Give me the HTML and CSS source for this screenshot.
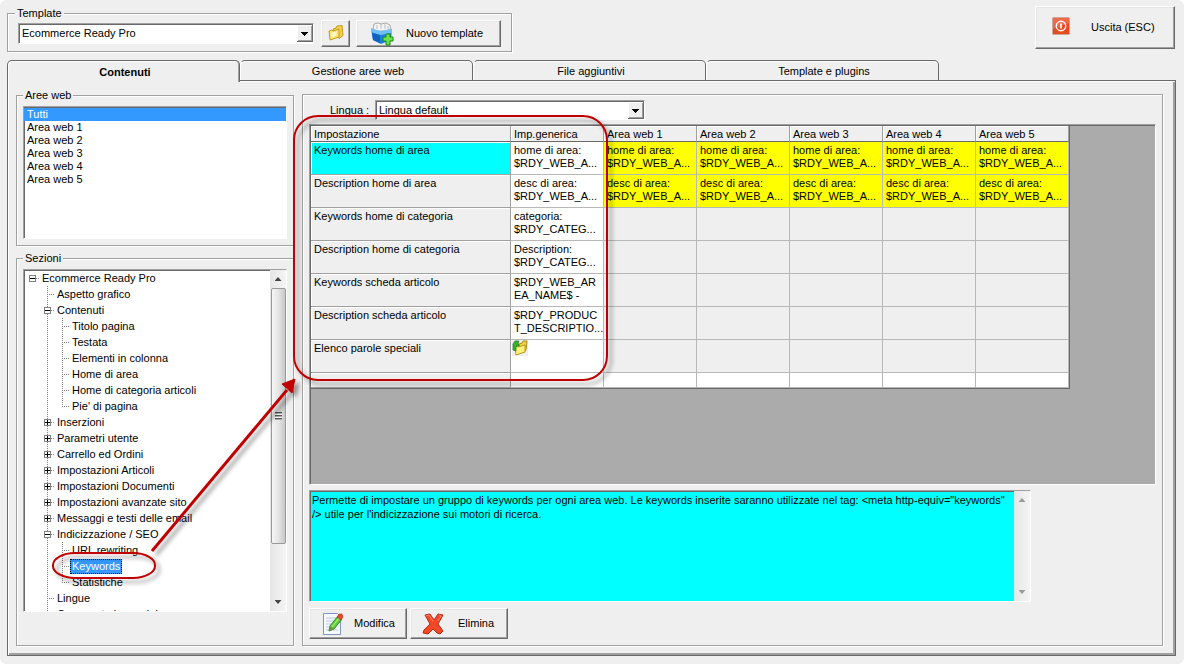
FILE: index.html
```html
<!DOCTYPE html>
<html lang="it">
<head>
  <meta charset="UTF-8" />
  <meta name="viewport" content="width=device-width, initial-scale=1.0"/>
  <title>Ecommerce Ready Pro</title>
  <link rel="stylesheet" href="styles.css">
</head>
<body>
  <div class="window">
    <header class="toolbar">
      <fieldset class="group template-group">
        <legend>Template</legend>
        <select class="combo template-select" aria-label="Template">
          <option>Ecommerce Ready Pro</option>
        </select>
        <button class="btn folder-btn" aria-label="Apri cartella">
          <svg width="18" height="18" viewBox="0 0 18 18">
            <path d="M6 4l3-1 1-2 5-.5 1 10-4 3z" fill="#f3cf4a" stroke="#c79a1c"/>
            <path d="M2 6l3-1 1 1 6-2 0 8-9 3z" fill="#ffe170" stroke="#c79a1c"/>
            <path d="M4 8l6-2-1 5-5 2z" fill="#fff6c4"/>
          </svg>
        </button>
        <button class="btn new-btn">
          <svg width="24" height="24" viewBox="0 0 24 24">
            <path d="M3 8l1-6 4-1 3 1 5-1 4 2 1 6H4z" fill="#f4f4f4" stroke="#aaa"/>
            <path d="M7 7V3M11 7V2M15 7V2M18 8V4" stroke="#bbb"/>
            <path d="M1 7l9 3 12-3-1 11-10 4-8-4z" fill="#1e7fe0"/>
            <path d="M1 6l9 3 12-2 0 4-12 2-9-3z" fill="#6fc0fa"/>
            <path d="M10 13v8l-7-3-1-7z" fill="#1262bd"/>
            <path d="M16 12h4v3h3v4h-3v4h-4v-4h-3v-4h3z" fill="#6be34c" stroke="#148a12"/>
          </svg>
          <span>Nuovo template</span>
        </button>
      </fieldset>
      <button class="btn exit-btn">
        <svg width="18" height="18" viewBox="0 0 18 18">
          <rect x=".5" y=".5" width="17" height="17" rx="1" fill="#e84a20" stroke="#c9a79c"/>
          <path d="M1 1h16v5L1 12z" fill="#f0694a"/>
          <circle cx="9" cy="9" r="4.7" fill="none" stroke="#fff" stroke-width="1.4"/>
          <path d="M9 6.500v5" stroke="#fff" stroke-width="1.700"/>
        </svg>
        <span>Uscita (ESC)</span>
      </button>
    </header>

    <nav class="tabs" role="tablist">
      <button class="tab active" role="tab" aria-selected="true">Contenuti</button>
      <button class="tab" role="tab">Gestione aree web</button>
      <button class="tab" role="tab">File aggiuntivi</button>
      <button class="tab" role="tab">Template e plugins</button>
    </nav>

    <main class="panel">
      <div class="sidebar">
        <fieldset class="group areas-group">
          <legend>Aree web</legend>
          <select class="areas-list" size="6" aria-label="Aree web">
            <option selected>Tutti</option>
            <option>Area web 1</option>
            <option>Area web 2</option>
            <option>Area web 3</option>
            <option>Area web 4</option>
            <option>Area web 5</option>
          </select>
        </fieldset>

        <fieldset class="group sections-group">
          <legend>Sezioni</legend>
          <div class="tree-box">
            <ul class="tree">
              <li class="root">
                <div class="row"><span class="node"><button class="toggle minus" aria-label="Comprimi"></button></span><a href="#">Ecommerce Ready Pro</a></div>
                <ul>
                  <li><div class="row"><span class="node"></span><a href="#">Aspetto grafico</a></div></li>
                  <li>
                    <div class="row"><span class="node"><button class="toggle minus" aria-label="Comprimi"></button></span><a href="#">Contenuti</a></div>
                    <ul>
                      <li><div class="row"><span class="node"></span><a href="#">Titolo pagina</a></div></li>
                      <li><div class="row"><span class="node"></span><a href="#">Testata</a></div></li>
                      <li><div class="row"><span class="node"></span><a href="#">Elementi in colonna</a></div></li>
                      <li><div class="row"><span class="node"></span><a href="#">Home di area</a></div></li>
                      <li><div class="row"><span class="node"></span><a href="#">Home di categoria articoli</a></div></li>
                      <li><div class="row"><span class="node"></span><a href="#">Pie' di pagina</a></div></li>
                    </ul>
                  </li>
                  <li><div class="row"><span class="node"><button class="toggle plus" aria-label="Espandi"></button></span><a href="#">Inserzioni</a></div></li>
                  <li><div class="row"><span class="node"><button class="toggle plus" aria-label="Espandi"></button></span><a href="#">Parametri utente</a></div></li>
                  <li><div class="row"><span class="node"><button class="toggle plus" aria-label="Espandi"></button></span><a href="#">Carrello ed Ordini</a></div></li>
                  <li><div class="row"><span class="node"><button class="toggle plus" aria-label="Espandi"></button></span><a href="#">Impostazioni Articoli</a></div></li>
                  <li><div class="row"><span class="node"><button class="toggle plus" aria-label="Espandi"></button></span><a href="#">Impostazioni Documenti</a></div></li>
                  <li><div class="row"><span class="node"><button class="toggle plus" aria-label="Espandi"></button></span><a href="#">Impostazioni avanzate sito</a></div></li>
                  <li><div class="row"><span class="node"><button class="toggle plus" aria-label="Espandi"></button></span><a href="#">Messaggi e testi delle email</a></div></li>
                  <li>
                    <div class="row"><span class="node"><button class="toggle minus" aria-label="Comprimi"></button></span><a href="#">Indicizzazione / SEO</a></div>
                    <ul>
                      <li><div class="row"><span class="node"></span><a href="#">URL rewriting</a></div></li>
                      <li><div class="row"><span class="node"></span><a href="#" class="selected">Keywords</a></div></li>
                      <li><div class="row"><span class="node"></span><a href="#">Statistiche</a></div></li>
                    </ul>
                  </li>
                  <li><div class="row"><span class="node"></span><a href="#">Lingue</a></div></li>
                  <li><div class="row"><span class="node"></span><a href="#">Commento immagini</a></div></li>
                  <li><div class="row"><span class="node"></span></div></li>
                </ul>
              </li>
            </ul>
            <div class="scrollbar">
              <span class="arrow up"></span>
              <span class="thumb"><span class="grip"></span></span>
              <span class="arrow down"></span>
            </div>
          </div>
        </fieldset>
      </div>

      <section class="content">
        <div class="lang-row">
          <label for="lang">Lingua :</label>
          <select class="combo" id="lang">
            <option>Lingua default</option>
          </select>
        </div>

        <div class="grid-box">
          <table class="grid">
            <thead>
              <tr>
                <th class="name-col">Impostazione</th>
                <th>Imp.generica</th>
                <th>Area web 1</th>
                <th>Area web 2</th>
                <th>Area web 3</th>
                <th>Area web 4</th>
                <th>Area web 5</th>
              </tr>
            </thead>
            <tbody>
              <tr class="filled">
                <th class="current">Keywords home di area</th>
                <td>home di area:<br>$RDY_WEB_A...</td>
                <td>home di area:<br>$RDY_WEB_A...</td>
                <td>home di area:<br>$RDY_WEB_A...</td>
                <td>home di area:<br>$RDY_WEB_A...</td>
                <td>home di area:<br>$RDY_WEB_A...</td>
                <td>home di area:<br>$RDY_WEB_A...</td>
              </tr>
              <tr class="filled">
                <th>Description home di area</th>
                <td>desc di area:<br>$RDY_WEB_A...</td>
                <td>desc di area:<br>$RDY_WEB_A...</td>
                <td>desc di area:<br>$RDY_WEB_A...</td>
                <td>desc di area:<br>$RDY_WEB_A...</td>
                <td>desc di area:<br>$RDY_WEB_A...</td>
                <td>desc di area:<br>$RDY_WEB_A...</td>
              </tr>
              <tr>
                <th>Keywords home di categoria</th>
                <td>categoria:<br>$RDY_CATEG...</td>
                <td></td><td></td><td></td><td></td><td></td>
              </tr>
              <tr>
                <th>Description home di categoria</th>
                <td>Description:<br>$RDY_CATEG...</td>
                <td></td><td></td><td></td><td></td><td></td>
              </tr>
              <tr>
                <th>Keywords scheda articolo</th>
                <td>$RDY_WEB_AR<br>EA_NAME$ -</td>
                <td></td><td></td><td></td><td></td><td></td>
              </tr>
              <tr>
                <th>Description scheda articolo</th>
                <td>$RDY_PRODUC<br>T_DESCRIPTIO...</td>
                <td></td><td></td><td></td><td></td><td></td>
              </tr>
              <tr>
                <th>Elenco parole speciali</th>
                <td class="icon-cell">
                  <svg width="16" height="16" viewBox="0 0 16 16">
                    <rect width="16" height="16" fill="#efefef"/>
                    <path d="M7 4l3-1 1-2h4l-1 9-5 3z" fill="#f0d040" stroke="#b08a18"/>
                    <path d="M3 6l3 1 7-2v7l-9 3z" fill="#fff27a" stroke="#c0981c"/>
                    <path d="M1 10V4l2-3h4l-1 2 1 3-3 0v5z" fill="#35b52c" stroke="#14781a" stroke-width=".7"/>
                  </svg>
                </td>
                <td></td><td></td><td></td><td></td><td></td>
              </tr>
              <tr class="blank">
                <th></th><td></td><td></td><td></td><td></td><td></td><td></td>
              </tr>
            </tbody>
          </table>
        </div>

        <div class="help-box">
          <textarea class="help-text" readonly aria-label="Descrizione">Permette di impostare un gruppo di keywords per ogni area web. Le keywords inserite saranno utilizzate nel tag: &lt;meta http-equiv="keywords" /&gt; utile per l'indicizzazione sui motori di ricerca.</textarea>
          <div class="scrollbar disabled">
            <span class="arrow up"></span>
            <span class="arrow down"></span>
          </div>
        </div>

        <div class="actions">
          <button class="btn action-btn">
            <svg width="22" height="24" viewBox="0 0 22 24">
              <path d="M1.500 1.500h14l3 3v18h-17z" fill="#f6f9ff" stroke="#7f93bd"/>
              <path d="M4 6h10M4 9h9M4 12h6M4 15h4M4 18h12" stroke="#b9c6e2"/>
              <path d="M7 19l1-5 8-10 4 3-8 10z" fill="#63cf3a" stroke="#2c8a1c"/>
              <path d="M10 15l7-9" stroke="#b8f296"/>
              <path d="M7 19l1-5 4 3z" fill="#6f9a3a"/>
              <path d="M15 5l2-3 3 0 1 3-2 3z" fill="#e8492c" stroke="#b83018" stroke-width=".6"/>
            </svg>
            <span>Modifica</span>
          </button>
          <button class="btn action-btn">
            <svg width="22" height="24" viewBox="0 0 22 24">
              <path d="M3 3l5-1 4 6 4-6 5 1-5 9 5 7-3 3-3-1-4-4-5 5-5-1 1-3 6-6z" fill="#f4482a" stroke="#bd2a10"/>
              <path d="M4 4l3-1 4 6M17 3l2 1-3 5" stroke="#ff8a68" fill="none"/>
            </svg>
            <span>Elimina</span>
          </button>
        </div>
      </section>
    </main>

    <!-- red callouts drawn over the window -->
    <svg class="callouts" width="620" height="600" viewBox="0 0 620 600">
      <defs>
        <filter id="shadow" x="-10%" y="-10%" width="130%" height="130%">
          <feDropShadow dx="4" dy="4" stdDeviation="2" flood-color="#000" flood-opacity=".4"/>
        </filter>
      </defs>
      <g filter="url(#shadow)" fill="none" stroke="#c00000">
        <rect x="294" y="116" width="313" height="264" rx="24" stroke-width="2"/>
        <rect x="53" y="553" width="102" height="25" rx="22" ry="12" stroke-width="2"/>
        <path d="M152 551L287 390" stroke-width="3"/>
        <path d="M295 379l-3 14-10-9z" fill="#c00000"/>
      </g>
    </svg>
  </div>
</body>
</html>
```
FILE: styles.css
```css
* {
  box-sizing: border-box;
}
body {
  margin: 0;
  background: #fff;
  color: #000;
}
body, button, select, textarea {
  font-family: "Liberation Sans", Arial, sans-serif;
  font-size: 11px;
  line-height: 13px;
}
.window {
  position: relative;
  display: flex;
  flex-direction: column;
  height: 100vh;
  min-height: 600px;
  padding: 6px 8px 8px 7px;
  background: #efefef;
  border-radius: 6px;
}
svg {
  flex: none;
}

/* group boxes */
.group {
  margin: 0;
  min-width: 0;
  border: 1px solid #a0a0a0;
  box-shadow: 1px 1px 0 #fff, inset 1px 1px 0 #fff;
}
.group legend {
  padding: 0 2px;
  background: #efefef;
}

/* buttons */
.btn {
  display: flex;
  align-items: center;
  padding: 0;
  color: #000;
  background: #efefef;
  border: 1px solid;
  border-color: #fff #696969 #696969 #fff;
  box-shadow: inset -1px -1px 0 #a0a0a0, inset 1px 1px 0 #e6e6e6;
}

/* drop-downs */
.combo {
  appearance: none;
  height: 21px;
  padding: 0 20px 0 3px;
  border: 1px solid;
  border-color: #a0a0a0 #fff #fff #a0a0a0;
  border-radius: 0;
  box-shadow: inset 1px 1px 0 #696969;
  background: #fff url("data:image/svg+xml,%3Csvg xmlns='http://www.w3.org/2000/svg' width='16' height='17'%3E%3Cpath d='M0 0h16v17H0z' fill='%23696969'/%3E%3Cpath d='M0 0h15v16H0z' fill='%23fff'/%3E%3Cpath d='M1 1h14v15H1z' fill='%23a0a0a0'/%3E%3Cpath d='M1 1h13v14H1z' fill='%23efefef'/%3E%3Cpath d='M4 7h7v1h-1v1H9v1H8v1H7v-1H6V9H5V8H4z'/%3E%3C/svg%3E") no-repeat right center;
}

/* toolbar */
.toolbar {
  display: flex;
  justify-content: space-between;
  align-items: flex-start;
  padding-right: 1px;
}
.template-group {
  display: flex;
  align-items: center;
  width: 505px;
  margin-top: 1px;
  padding: 0 10px 4px;
}
.template-group legend {
  margin-left: -3px;
}
.template-select {
  flex: 1;
  margin-right: 7px;
}
.folder-btn {
  justify-content: center;
  width: 29px;
  height: 27px;
  margin-right: 6px;
}
.new-btn {
  width: 145px;
  height: 27px;
  padding-left: 13px;
  gap: 12px;
}
.exit-btn {
  width: 140px;
  height: 43px;
  padding: 0 0 4px 16px;
  gap: 21px;
}
.exit-btn span {
  padding-top: 4px;
}

/* tabs */
.tabs {
  display: flex;
  margin-top: 8px;
  margin-bottom: -1px;
}
.tab {
  width: 233px;
  height: 21px;
  padding: 2px 0 0 3px;
  color: #000;
  background: #efefef;
  border: 1px solid #696969;
  border-left-color: #fff;
  border-radius: 5px 5px 0 0;
  box-shadow: inset 0 1px 0 #fff;
}
.tab.active {
  z-index: 1;
  height: 22px;
  margin-bottom: -1px;
  font-weight: bold;
  border-left-color: #696969;
  border-bottom: none;
  box-shadow: inset 1px 1px 0 #fff, inset -1px 0 0 #a0a0a0;
}

/* main panel */
.panel {
  flex: 1;
  display: flex;
  gap: 8px;
  min-height: 0;
  padding: 8px 12px 9px 8px;
  border: 1px solid #696969;
  box-shadow: inset 1px 1px 0 #fff, inset -2px -2px 0 #a0a0a0;
}
.sidebar {
  display: flex;
  flex-direction: column;
  gap: 6px;
  width: 278px;
}
.areas-group, .sections-group {
  padding: 4px 6px 6px;
}
.areas-group legend, .sections-group legend {
  margin-left: 0;
}
.areas-list {
  display: block;
  width: 100%;
  height: 133px;
  padding: 1px 0 0;
  overflow: hidden;
  background: #fff;
  border: 1px solid;
  border-color: #a0a0a0 #fff #fff #a0a0a0;
  border-radius: 0;
  box-shadow: inset 1px 1px 0 #696969;
  outline: none;
}
.areas-list option {
  height: 13px;
  min-height: 13px;
  padding: 0 3px;
}
.areas-list option:checked {
  color: #fff;
  background: linear-gradient(#39f, #39f);
}
.sections-group {
  flex: 1;
  display: flex;
  min-height: 0;
  padding-bottom: 33px;
}

/* tree */
.tree-box {
  flex: 1;
  display: flex;
  min-height: 0;
  overflow: hidden;
  background: #fff;
  border: 1px solid;
  border-color: #a0a0a0 #fff #fff #a0a0a0;
  box-shadow: inset 1px 1px 0 #696969;
}
.tree {
  flex: 1;
  padding: 0 0 0 3px;
}
.tree, .tree ul {
  margin: 0;
  list-style: none;
}
.tree ul {
  padding: 0 0 0 15px;
}
.tree li {
  background: repeating-linear-gradient(#808080 0 1px, #fff 1px 2px) no-repeat 5px 0 / 1px 100%;
}
.tree li:last-child {
  background-size: 1px 9px;
}
.tree .root {
  background: none;
}
.row {
  display: flex;
  align-items: center;
  height: 16px;
  white-space: nowrap;
}
.node {
  display: flex;
  align-items: center;
  width: 13px;
  height: 16px;
  padding-left: 2px;
  background: repeating-linear-gradient(90deg, #808080 0 1px, #fff 1px 2px) no-repeat 5px 8px / 8px 1px;
}
.row a {
  padding: 1px 2px;
  color: #000;
  text-decoration: none;
}
.row .selected {
  color: #fff;
  background: #39f;
  outline: 1px dotted #000;
  outline-offset: -1px;
}
.toggle {
  width: 7px;
  height: 7px;
  margin-top: 1px;
  padding: 0;
  border: 1px solid #808080;
  background: linear-gradient(#000, #000) no-repeat center / 5px 1px, #fff;
}
.toggle.plus {
  background: linear-gradient(#000, #000) no-repeat center / 5px 1px, linear-gradient(#000, #000) no-repeat center / 1px 5px, #fff;
}

/* scrollbars */
.scrollbar {
  display: flex;
  flex-direction: column;
  align-items: center;
  width: 16px;
  background: linear-gradient(90deg, #e6e6e6, #f4f4f4);
}
.arrow {
  width: 7px;
  height: 4px;
  margin: 7px 0;
  background: #444;
}
.arrow.up {
  clip-path: polygon(50% 0, 100% 100%, 0 100%);
}
.arrow.down {
  margin-top: auto;
  clip-path: polygon(0 0, 100% 0, 50% 100%);
}
.disabled .arrow {
  background: #999;
}
.thumb {
  display: flex;
  align-items: center;
  justify-content: center;
  width: 15px;
  height: 75%;
  border: 1px solid #999;
  border-radius: 2px;
  background: linear-gradient(90deg, #f6f6f6, #e4e4e4 50%, #c8c8c8);
}
.grip {
  width: 7px;
  height: 8px;
  background: repeating-linear-gradient(#555 0 1px, #aaa 1px 2px, #fff 2px 3px);
}

/* settings */
.content {
  flex: 1;
  display: flex;
  flex-direction: column;
  min-width: 0;
  margin-top: 5px;
  padding: 5px 6px 6px;
  border: 1px solid #a0a0a0;
  box-shadow: 1px 1px 0 #fff, inset 1px 1px 0 #fff;
}
.lang-row {
  display: flex;
  align-items: center;
  padding-left: 21px;
}
.lang-row label {
  width: 45px;
}
.lang-row .combo {
  width: 270px;
  height: 20px;
}
.grid-box {
  flex: 1;
  min-height: 0;
  margin-top: 4px;
  overflow: hidden;
  background: #ababab;
  border: 1px solid;
  border-color: #a0a0a0 #fff #fff #a0a0a0;
  box-shadow: inset 1px 1px 0 #696969;
  padding: 1px 0 0 1px;
}
.grid {
  width: 759px;
  table-layout: fixed;
  border-collapse: separate;
  border-spacing: 0;
  border-right: 1px solid #696969;
  border-bottom: 1px solid #696969;
}
.grid th, .grid td {
  height: 33px;
  padding: 2px 0 0 3px;
  text-align: left;
  vertical-align: top;
  font-weight: normal;
  white-space: nowrap;
  overflow: hidden;
  background: #efefef;
  border-right: 1px solid #b8b8b8;
  border-bottom: 1px solid #b8b8b8;
}
.grid th {
  border-color: #a0a0a0;
  box-shadow: inset 1px 1px 0 #fff;
}
.grid thead th {
  height: 16px;
  border-bottom-color: #696969;
}
.grid .name-col {
  width: 200px;
}
.grid .current {
  background: #0ff;
}
.grid td:nth-child(2), .grid .blank td {
  background: #fff;
}
.grid .filled td:nth-child(n+3) {
  background: #ff0;
}
.grid .icon-cell {
  padding: 0 0 0 1px;
}
.grid .blank th, .grid .blank td {
  height: 15px;
  padding: 0;
}

/* description */
.help-box {
  display: flex;
  width: 722px;
  max-width: 100%;
  height: 112px;
  margin-top: 5px;
  border: 1px solid;
  border-color: #a0a0a0 #fff #fff #a0a0a0;
}
.help-text {
  flex: 1;
  padding: 1px 0 0 1px;
  color: #000;
  line-height: 14px;
  background: #0ff;
  border: none;
  border-top: 1px solid #696969;
  border-left: 1px solid #696969;
  border-radius: 0;
  outline: none;
  resize: none;
  overflow: hidden;
}
.actions {
  display: flex;
  gap: 3px;
  margin-top: 6px;
}
.action-btn {
  width: 98px;
  height: 31px;
  padding-left: 12px;
  gap: 10px;
}
.action-btn + .action-btn {
  padding-left: 11px;
  gap: 14px;
}

.callouts {
  position: absolute;
  top: 0;
  left: 0;
  pointer-events: none;
}
```
